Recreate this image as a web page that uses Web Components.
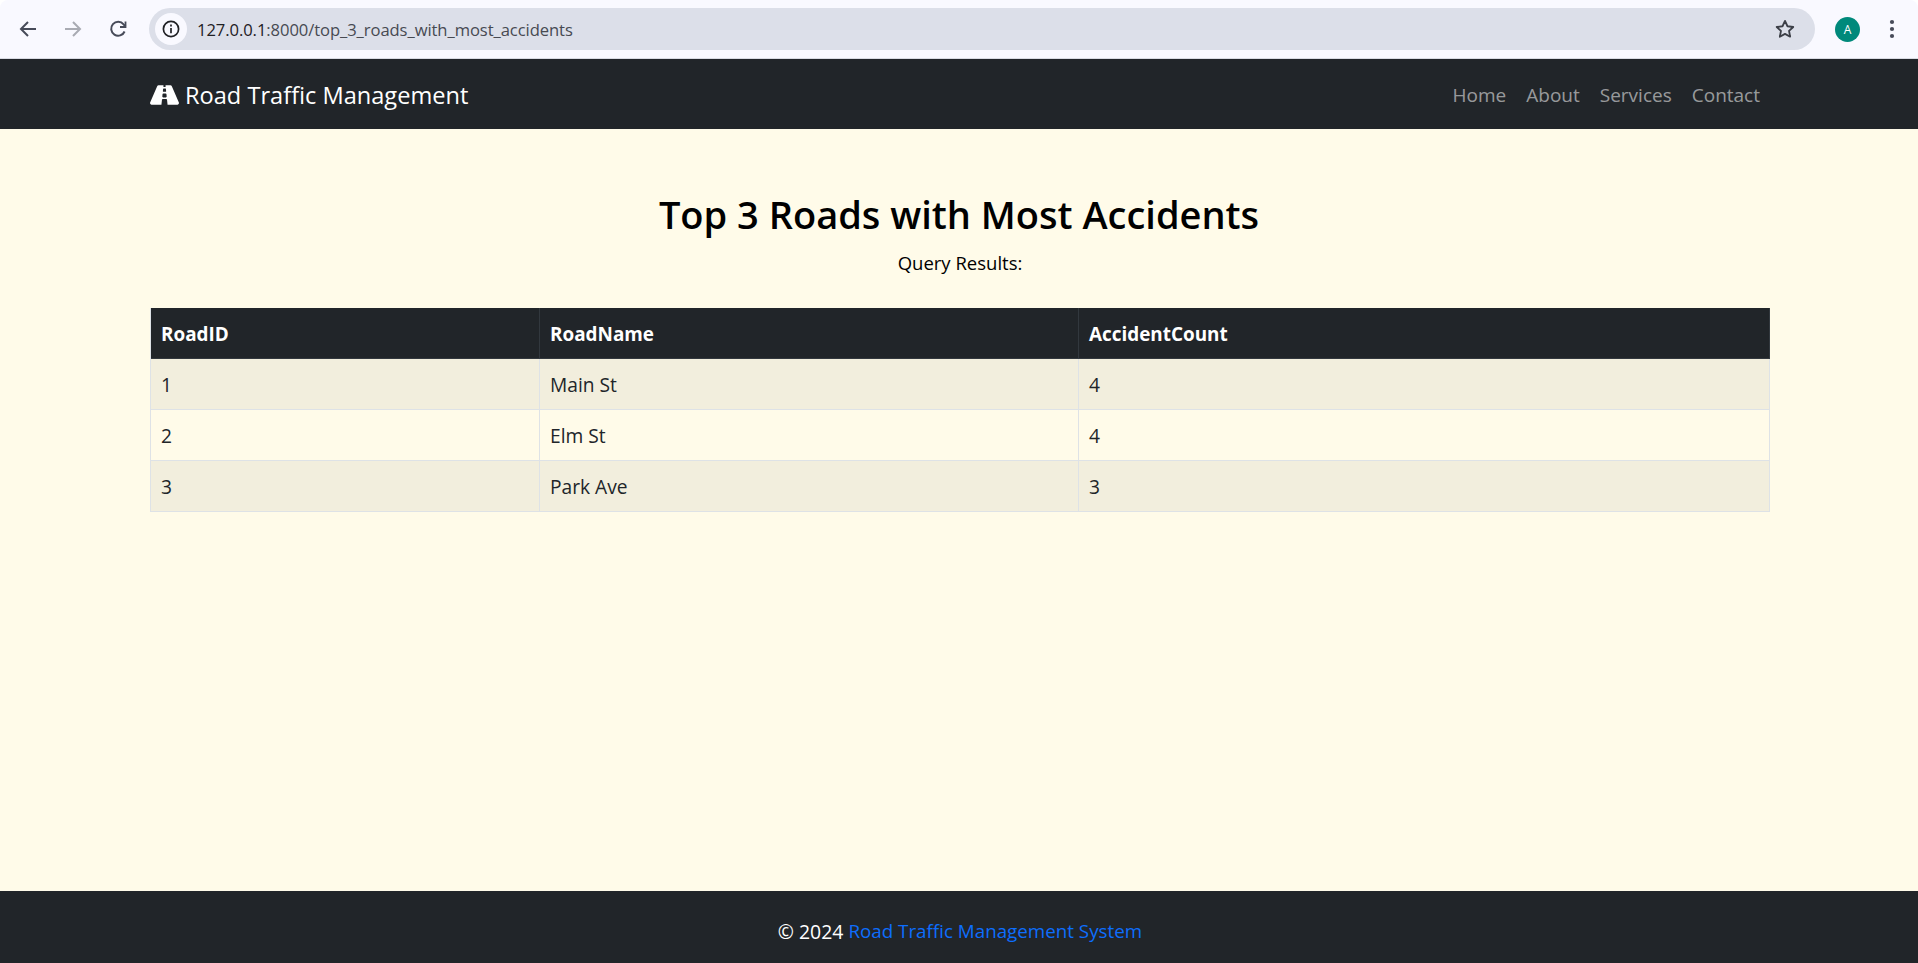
<!DOCTYPE html>
<html lang="en">
<head>
<meta charset="utf-8">
<title>Top 3 Roads with Most Accidents</title>
<style>
  html,body{ margin:0; height:100%; background:#fff; }
  body{ display:flex; flex-direction:column; height:963px; overflow:hidden; font-family:"Open Sans","Noto Sans",sans-serif; }
  page-main{ flex:1; }
</style>
</head>
<body>
<browser-bar url-host="127.0.0.1" url-path=":8000/top_3_roads_with_most_accidents"></browser-bar>
<site-nav brand="Road Traffic Management">
  <a href="#">Home</a><a href="#">About</a><a href="#">Services</a><a href="#">Contact</a>
</site-nav>
<page-main>
  <span slot="title">Top 3 Roads with Most Accidents</span>
  <span slot="sub">Query Results:</span>
  <result-table columns="RoadID,RoadName,AccidentCount" rows="1,Main St,4;2,Elm St,4;3,Park Ave,3"></result-table>
</page-main>
<site-footer>© 2024 <a href="#" slot="link">Road Traffic Management System</a></site-footer>

<script>
(function(){
  class BrowserBar extends HTMLElement{
    connectedCallback(){
      this.attachShadow({mode:'open'});
      const host = this.getAttribute('url-host');
      const path = this.getAttribute('url-path');
      this.shadowRoot.innerHTML = `
        <style>
          :host{ display:flex; align-items:center; height:58px; flex:none; background:#f9f9ff; border-bottom:1px solid #d9dbe3; border-radius:8px 8px 0 0; font-family:"Open Sans",sans-serif; }
          svg{ display:block; flex:none; }
          .nav{ display:flex; align-items:center; gap:21px; padding:0 0 0 16px; margin-right:19px; }
          .omni{ flex:1; height:42px; display:flex; align-items:center; background:#dcdfe9; border-radius:21px; padding:0 19px 0 6px; }
          .info{ width:32px; height:32px; border-radius:50%; background:#f9f9ff; display:flex; align-items:center; justify-content:center; margin-right:10px; }
          .url{ flex:1; font-size:16.6px; letter-spacing:-.08px; color:#474a52; white-space:nowrap; }
          .url b{ font-weight:400; color:#1f2024; }
          .avatar{ width:25px; height:25px; border-radius:50%; background:#00897b; color:#fff; font-size:12px; display:flex; align-items:center; justify-content:center; margin-left:20px; }
          .menu{ margin:0 23px 0 29px; }
        </style>
        <div class="nav">
          <svg width="24" height="24" viewBox="0 0 24 24" fill="none" stroke="#474b59" stroke-width="2"><path d="M20 12H5.5M12 5l-7 7 7 7"/></svg>
          <svg width="24" height="24" viewBox="0 0 24 24" fill="none" stroke="#a9abb3" stroke-width="2"><path d="M4 12h14.5M12 5l7 7-7 7"/></svg>
          <svg width="24" height="24" viewBox="0 0 24 24" fill="none" stroke="#474b59" stroke-width="2"><path d="M18.600 14.500a7 7 0 1 1-1-7.200L19.500 9.500"/><path d="M19.500 4.500v5.500h-5.500" stroke-width="1.8"/></svg>
        </div>
        <div class="omni">
          <span class="info"><svg width="20" height="20" viewBox="0 0 20 20" fill="none" stroke="#1f2024" stroke-width="1.7"><circle cx="10" cy="10" r="7.6"/><path d="M10 9v5.2M10 5.6v1.8"/></svg></span>
          <span class="url"><b>${host}</b>${path}</span>
          <svg width="22" height="22" viewBox="0 0 24 24" fill="none" stroke="#3c3f47" stroke-width="2" stroke-linejoin="round"><path d="M12 3.200l2.700 5.800 6.300.8-4.600 4.300 1.200 6.300L12 17.300l-5.600 3.100 1.200-6.300L3 9.800l6.300-.8z"/></svg>
        </div>
        <span class="avatar">A</span>
        <svg class="menu" width="6" height="20" viewBox="0 0 6 20" fill="#474b59"><circle cx="3" cy="3" r="2.1"/><circle cx="3" cy="10" r="2.1"/><circle cx="3" cy="17" r="2.1"/></svg>
      `;
    }
  }
  customElements.define('browser-bar', BrowserBar);

  class SiteNav extends HTMLElement{
    connectedCallback(){
      this.attachShadow({mode:'open'});
      this.shadowRoot.innerHTML = `
        <style>
          :host{ display:block; flex:none; height:70px; background:#212529; }
          .wrap{ box-sizing:border-box; width:1650px; height:100%; margin:0 auto; padding:1px 15px 0; display:flex; align-items:center; justify-content:space-between; }
          .brand{ display:flex; align-items:center; gap:6px; color:#fff; font-size:23.6px; white-space:nowrap; }
          .brand svg{ margin-left:1px; }
          .links{ display:flex; gap:20px; padding-right:9px; }
          ::slotted(a){ color:rgba(255,255,255,.55); text-decoration:none; font-size:19px; }
        </style>
        <div class="wrap">
          <span class="brand">
            <svg width="29" height="26" viewBox="0 0 576 512" fill="#fff"><path d="M573.19 402.67l-139.79-320C428.43 71.29 417.6 64 405.68 64h-97.59l2.45 23.16c.5 4.72-3.21 8.84-7.96 8.84h-29.16c-4.75 0-8.46-4.12-7.96-8.84L267.91 64h-97.59c-11.93 0-22.76 7.29-27.73 18.67L2.8 402.67C-6.45 423.86 8.31 448 30.54 448h196.84l10.31-97.68c.86-8.14 7.72-14.32 15.91-14.32h68.8c8.19 0 15.05 6.18 15.91 14.32L348.62 448h196.84c22.23 0 36.99-24.14 27.73-45.33zM260.4 135.16a8 8 0 0 1 7.96-7.16h39.29c4.09 0 7.53 3.09 7.96 7.16l4.6 43.58c.75 7.09-4.81 13.26-11.93 13.26h-40.54c-7.13 0-12.68-6.17-11.93-13.26l4.6-43.58zM315.64 304h-55.29c-9.5 0-16.91-8.23-15.91-17.68l5.07-48c.86-8.14 7.72-14.32 15.91-14.32h45.15c8.19 0 15.05 6.18 15.91 14.32l5.07 48c1 9.45-6.41 17.68-15.91 17.68z"/></svg>
            ${this.getAttribute('brand')}
          </span>
          <nav class="links"><slot></slot></nav>
        </div>
      `;
    }
  }
  customElements.define('site-nav', SiteNav);

  class PageMain extends HTMLElement{
    connectedCallback(){
      this.attachShadow({mode:'open'});
      this.shadowRoot.innerHTML = `
        <style>
          :host{ display:block; background:#fffbe9; color:#000; }
          .wrap{ box-sizing:border-box; width:1650px; margin:0 auto; padding:59px 15px 0; }
          h1{ margin:0; text-align:center; font-size:38px; line-height:52px; font-weight:600; }
          p{ margin:8px 0 30px; padding-left:2px; text-align:center; font-size:18.5px; line-height:30px; }
        </style>
        <div class="wrap">
          <h1><slot name="title"></slot></h1>
          <p><slot name="sub"></slot></p>
          <slot></slot>
        </div>
      `;
    }
  }
  customElements.define('page-main', PageMain);

  class ResultTable extends HTMLElement{
    connectedCallback(){
      this.attachShadow({mode:'open'});
      const cols = this.getAttribute('columns').split(',');
      const rows = this.getAttribute('rows').split(';').map(r=>r.split(','));
      const cell = (t,cls)=>`<div class="${cls}">${t}</div>`;
      this.shadowRoot.innerHTML = `
        <style>
          :host{ display:block; width:1620px; margin-left:1px; }
          .grid{ display:grid; grid-template-columns:389px 539px 1fr; grid-auto-rows:51px; border-left:1px solid #dee2e6; }
          .grid > div{ box-sizing:border-box; display:flex; align-items:center; padding:0 10px; font-size:19.2px; color:#212529; border-right:1px solid #dee2e6; border-bottom:1px solid #dee2e6; }
          .grid > .h{ background:#212529; color:#fff; font-weight:700; font-size:18.9px; padding-top:2px; border-color:#32383e; }
          .grid > .odd{ background:#f2eedd; }
        </style>
        <div class="grid" role="table">
          ${cols.map(c=>cell(c,'h')).join('')}
          ${rows.map((r,i)=>r.map(t=>cell(t,i%2==0?'odd':'even')).join('')).join('')}
        </div>
      `;
    }
  }
  customElements.define('result-table', ResultTable);

  class SiteFooter extends HTMLElement{
    connectedCallback(){
      this.attachShadow({mode:'open'});
      this.shadowRoot.innerHTML = `
        <style>
          :host{ display:flex; flex:none; box-sizing:border-box; height:72px; padding:8px 0 0 2px; align-items:center; justify-content:center; background:#212529; color:#fff; font-size:19.4px; white-space:pre; }
          ::slotted(a){ color:#0d6efd; text-decoration:none; font-size:18.8px; }
        </style>
        <slot></slot><slot name="link"></slot>
      `;
    }
  }
  customElements.define('site-footer', SiteFooter);
})();
</script>
</body>
</html>
